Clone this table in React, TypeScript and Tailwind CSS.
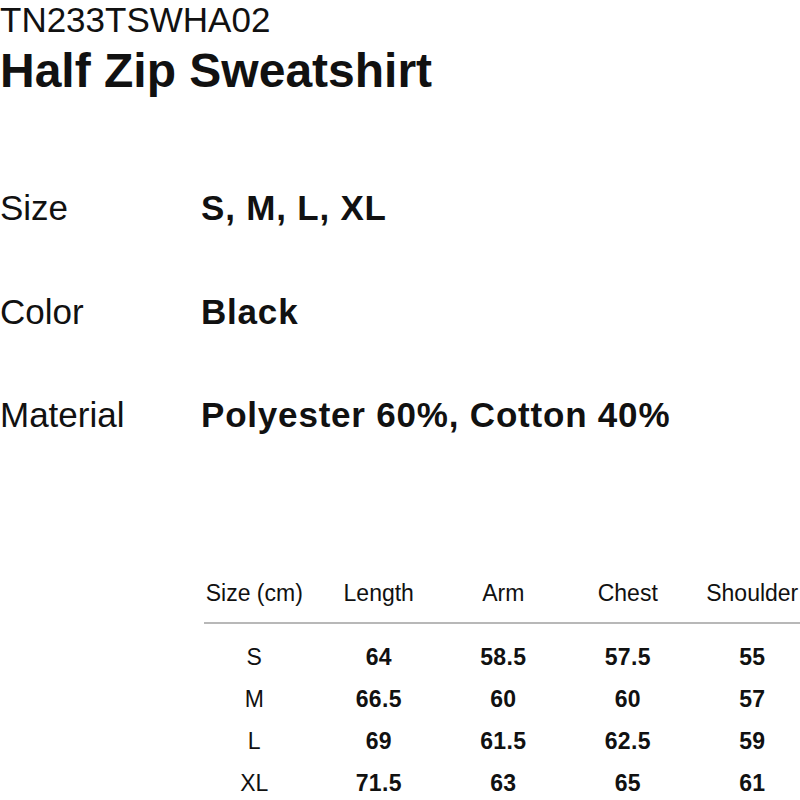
import React from 'react';

const specs = [
  { label: 'Size', value: 'S, M, L, XL' },
  { label: 'Color', value: 'Black' },
  { label: 'Material', value: 'Polyester 60%, Cotton 40%' },
];

const columns = ['Size (cm)', 'Length', 'Arm', 'Chest', 'Shoulder'];

const rows = [
  ['S', '64', '58.5', '57.5', '55'],
  ['M', '66.5', '60', '60', '57'],
  ['L', '69', '61.5', '62.5', '59'],
  ['XL', '71.5', '63', '65', '61'],
];

const App: React.FC = () => {
  return (
    <div
      className="w-[800px] h-[800px] overflow-hidden bg-white text-[#111]"
      style={{ fontFamily: '"Liberation Sans", Arial, Helvetica, sans-serif' }}
    >
      {/* product header */}
      <div className="text-[35px] leading-[39px]">TN233TSWHA02</div>
      <h1 className="mt-[8px] text-[48px] leading-[48px] font-bold">Half Zip Sweatshirt</h1>

      {/* spec list */}
      <div className="mt-[95px] flex flex-col gap-[68.5px]">
        {specs.map((s) => (
          <div key={s.label} className="flex text-[35px] leading-[35px]">
            <div className="w-[201px] shrink-0">{s.label}</div>
            <div className="font-bold whitespace-nowrap tracking-[0.8px]">{s.value}</div>
          </div>
        ))}
      </div>

      {/* size chart */}
      <div className="mt-[150px] ml-[192px] w-[630px]">
        <div className="grid grid-cols-[repeat(5,124.5px)] text-[23px] leading-[23px]">
          {columns.map((c) => (
            <div key={c} className="text-center whitespace-nowrap">{c}</div>
          ))}
        </div>
        <div className="mt-[16.5px] ml-[12px] h-[2px] bg-[#b8b8b8]" />
        <div className="mt-[12px]">
          {rows.map((r) => (
            <div key={r[0]} className="grid grid-cols-[repeat(5,124.5px)] text-[23px] leading-[42px]">
              {r.map((v, i) => (
                <div key={i} className={i === 0 ? 'text-center' : 'text-center font-bold tracking-[0.3px]'}>
                  {v}
                </div>
              ))}
            </div>
          ))}
        </div>
      </div>
    </div>
  );
};

export default App;
